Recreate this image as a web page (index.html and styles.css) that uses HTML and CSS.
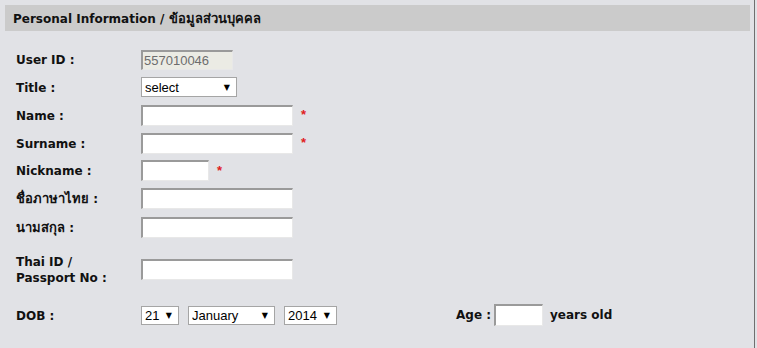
FILE: index.html
```html
<!DOCTYPE html>
<html lang="th">
  <head>
    <meta charset="UTF-8" />
    <title>Personal Information</title>
    <link rel="stylesheet" href="styles.css">
  </head>
  <body>
    <div class="page">
      <div class="section-head">Personal Information / <span class="th">ข้อมูลส่วนบุคคล</span></div>
      <form class="form-grid">
        <label class="field-label" for="userid">User ID :</label>
        <div class="field">
          <input type="text" class="text-in readonly w-id" id="userid" value="557010046" readonly />
        </div>

        <label class="field-label" for="title">Title :</label>
        <div class="field">
          <span class="dropdown w-title">
            <select id="title"><option>select</option><option>Mr.</option><option>Mrs.</option><option>Ms.</option></select>
            <span class="arrow">&#9660;</span>
          </span>
        </div>

        <label class="field-label" for="name">Name :</label>
        <div class="field">
          <input type="text" class="text-in w-long" id="name" />
          <span class="req">*</span>
        </div>

        <label class="field-label" for="surname">Surname :</label>
        <div class="field">
          <input type="text" class="text-in w-long" id="surname" />
          <span class="req">*</span>
        </div>

        <label class="field-label" for="nickname">Nickname :</label>
        <div class="field">
          <input type="text" class="text-in w-short" id="nickname" />
          <span class="req">*</span>
        </div>

        <label class="field-label" for="thainame"><span class="th">ชื่อภาษาไทย</span>&nbsp;:</label>
        <div class="field">
          <input type="text" class="text-in w-long" id="thainame" />
        </div>

        <label class="field-label" for="thaisurname"><span class="th">นามสกุล</span>&nbsp;:</label>
        <div class="field">
          <input type="text" class="text-in w-long" id="thaisurname" />
        </div>

        <label class="field-label" for="idno">Thai ID /<br />Passport No :</label>
        <div class="field">
          <input type="text" class="text-in w-long" id="idno" />
        </div>

        <label class="field-label" for="dobday">DOB :</label>
        <div class="field">
          <span class="dropdown w-day">
            <select id="dobday"><option>21</option></select>
            <span class="arrow">&#9660;</span>
          </span>
          <span class="dropdown w-month">
            <select id="dobmonth"><option>January</option></select>
            <span class="arrow">&#9660;</span>
          </span>
          <span class="dropdown w-year">
            <select id="dobyear"><option>2014</option></select>
            <span class="arrow">&#9660;</span>
          </span>
          <span class="age">
            <label for="age">Age :</label>
            <input type="text" class="text-in w-age" id="age" />
            <span>years old</span>
          </span>
        </div>
      </form>
    </div>
  </body>
</html>
```

FILE: styles.css
```css
body {
  margin: 0;
  background-color: #e1e2e6;
  font-family: "DejaVu Sans", Tahoma, sans-serif;
  font-size: 12px;
  color: #111;
}

.page {
  width: 755px;
  height: 348px;
  border-right: 1px solid #6f6f6f;
  box-sizing: border-box;
  overflow: hidden;
}

.section-head {
  margin: 5px 0 0 5px;
  width: 745px;
  height: 26px;
  line-height: 27px;
  padding-left: 8px;
  box-sizing: border-box;
  background-color: #cbcbcb;
  font-weight: bold;
  font-size: 12px;
}

/* thai glyphs come out smaller than tahoma's */
.th {
  font-size: 13px;
}

.form-grid {
  display: grid;
  grid-template-columns: 125px 1fr;
  grid-template-rows: 27px 28px 28px 28px 27px 29px 29px 55px 36px;
  margin: 15px 0 0 16px;
}

.field-label {
  display: flex;
  align-items: center;
  font-weight: bold;
  line-height: 16px;
  padding-top: 1px;
}

.field {
  display: flex;
  align-items: center;
}

.text-in {
  height: 21px;
  padding: 0 2px;
  box-sizing: border-box;
  border-style: solid;
  border-width: 2px 1px 1px 2px;
  border-color: #9a9a9a #e8e8e8 #e8e8e8 #9a9a9a;
  background: #fff;
  font-family: "Liberation Sans", Arial, sans-serif;
  font-size: 13px;
}

.readonly {
  height: 20px;
  background: #ebebe4;
  color: #6d6d6d;
  padding: 0 1px;
}

.w-id { width: 92px; }
.w-long { width: 152px; }
.w-short { width: 68px; }
.w-age { width: 49px; height: 22px; }

.req {
  margin-left: 8px;
  color: #e0201c;
  font-family: "Liberation Sans", Arial, sans-serif;
  font-size: 13px;
  font-weight: bold;
  line-height: 12px;
}

.dropdown {
  display: inline-flex;
  align-items: center;
  height: 19px;
  box-sizing: border-box;
  border: 1px solid #a5a5a5;
  background: #fff;
  margin-right: 9px;
}

.dropdown select {
  flex: 1;
  min-width: 0;
  height: 17px;
  border: none;
  padding: 0 0 0 3px;
  margin: 0;
  background: transparent;
  appearance: none;
  -webkit-appearance: none;
  font-family: "Liberation Sans", Arial, sans-serif;
  font-size: 13px;
  color: #000;
  outline: none;
}

.dropdown .arrow {
  font-size: 8px;
  padding-right: 6px;
  color: #000;
}

.w-title { width: 96px; height: 20px; }
.w-day { width: 38px; }
.w-month { width: 87px; }
.w-year { width: 53px; margin-right: 0; }

.age {
  display: inline-flex;
  align-items: center;
  margin-left: 119px;
  font-weight: bold;
  font-size: 12px;
}

.age label {
  margin-right: 3px;
}

.age .w-age {
  margin-right: 7px;
}
```
